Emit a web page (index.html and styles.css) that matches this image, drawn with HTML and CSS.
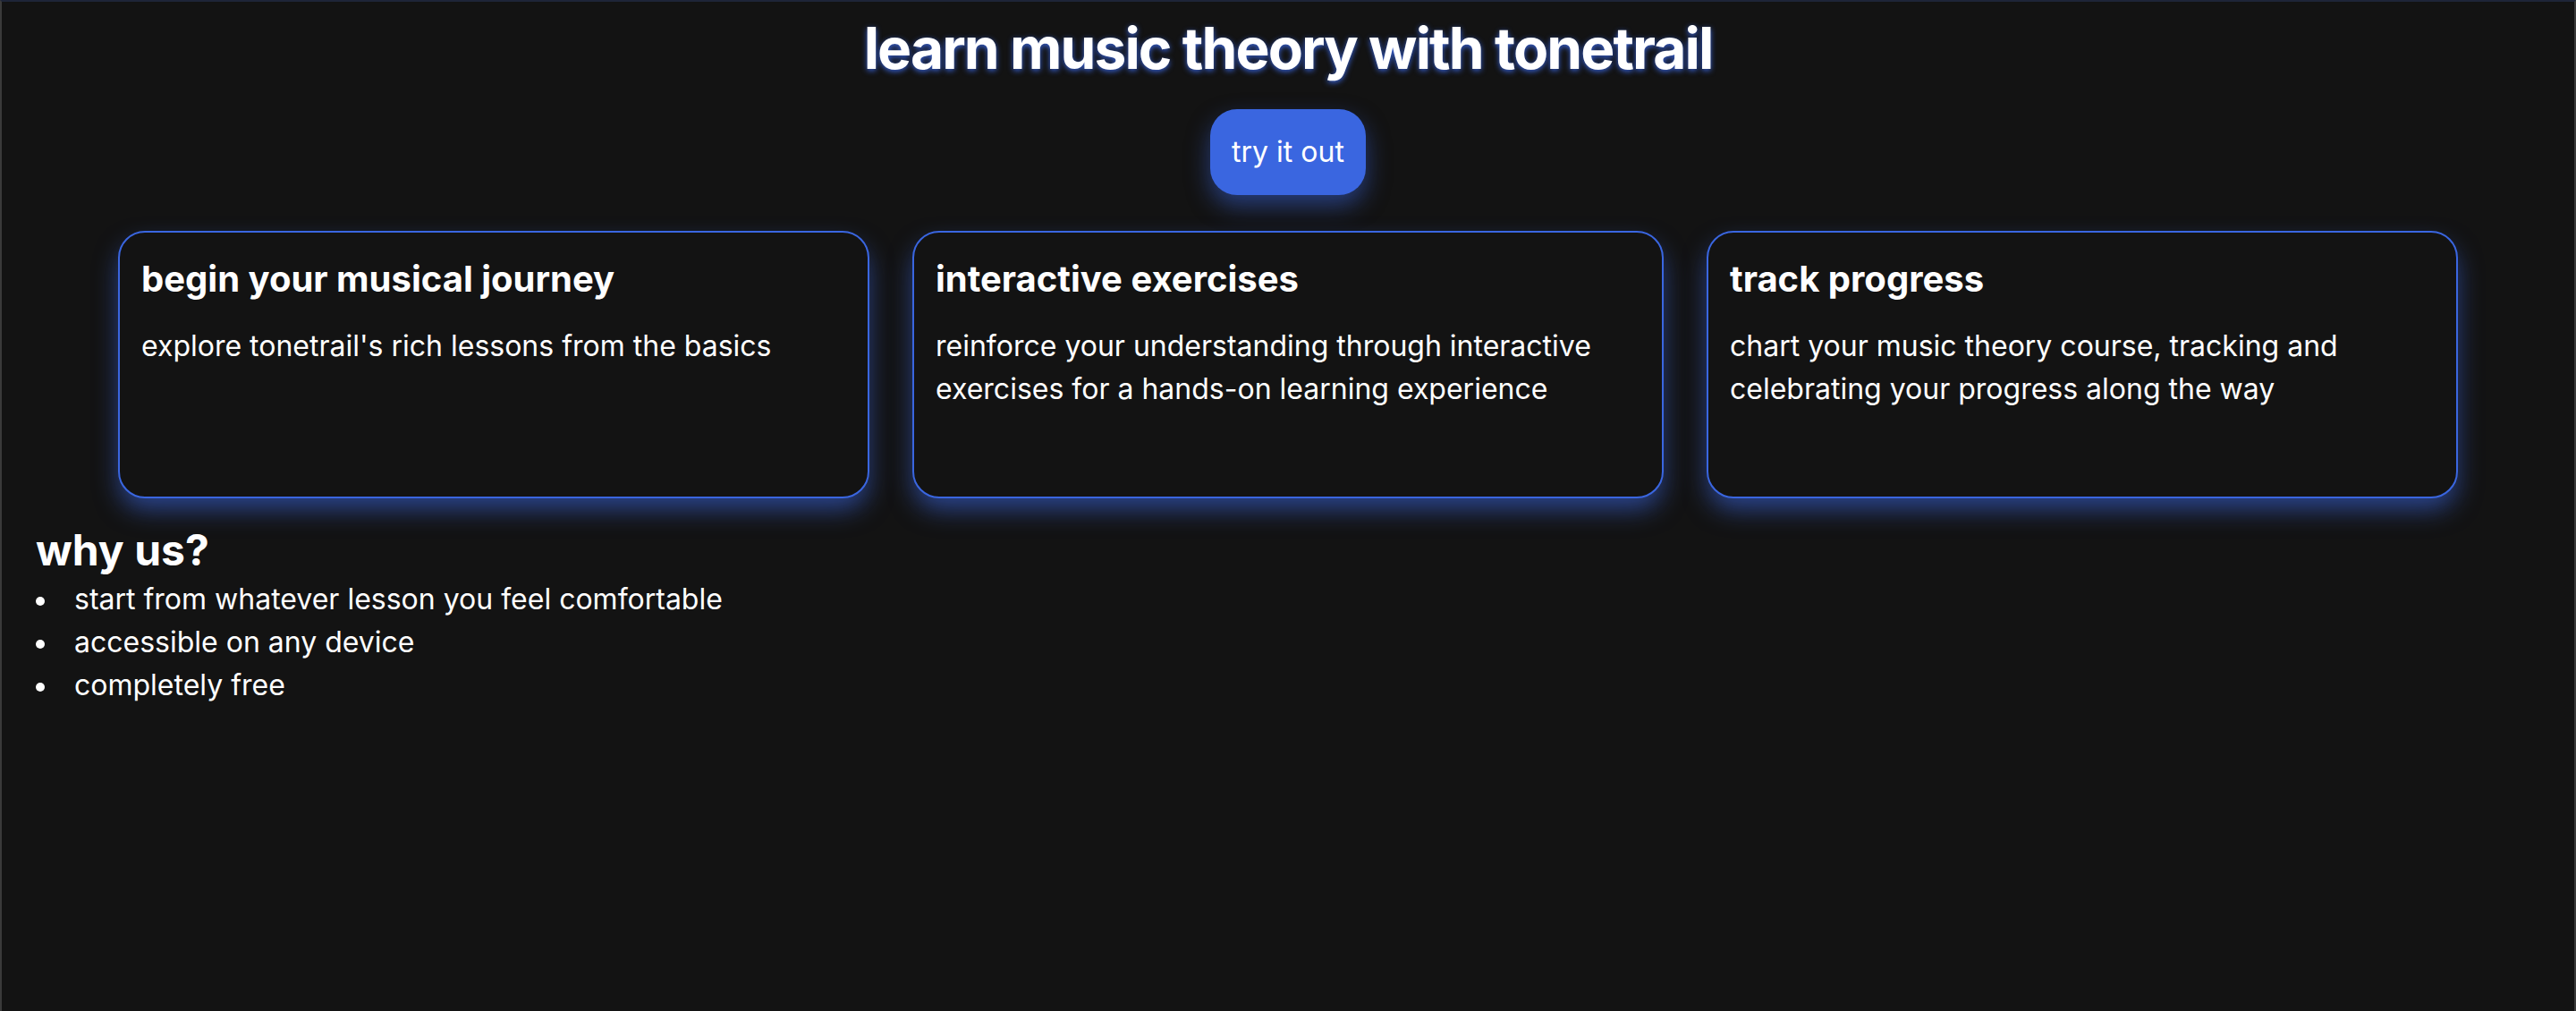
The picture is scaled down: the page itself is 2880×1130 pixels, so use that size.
FILE: index.html
```html
<!DOCTYPE html>
<html lang="en">
<head>
<meta charset="utf-8">
<title>tonetrail</title>
<link rel="stylesheet" href="styles.css">
</head>
<body>
<main class="page">
  <header class="hero">
    <h1 class="hero-title">learn music theory with tonetrail</h1>
    <button class="cta">try it out</button>
  </header>
  <section class="cards">
    <article class="card">
      <h3 class="card-title">begin your musical journey</h3>
      <p class="card-text">explore tonetrail's rich lessons from the basics</p>
    </article>
    <article class="card">
      <h3 class="card-title">interactive exercises</h3>
      <p class="card-text">reinforce your understanding through interactive exercises for a hands-on learning experience</p>
    </article>
    <article class="card">
      <h3 class="card-title">track progress</h3>
      <p class="card-text">chart your music theory course, tracking and celebrating your progress along the way</p>
    </article>
  </section>
  <section class="why">
    <h2 class="why-title">why us?</h2>
    <ul class="why-list">
      <li>start from whatever lesson you feel comfortable</li>
      <li>accessible on any device</li>
      <li>completely free</li>
    </ul>
  </section>
</main>
</body>
</html>
```
FILE: styles.css
```css
* { box-sizing: border-box; }

html, body {
  margin: 0;
  padding: 0;
}

body {
  background: #131313;
  color: #ffffff;
  font-family: Inter, "Noto Sans", "Liberation Sans", sans-serif;
  border-top: 2px solid #1e2538;
  border-left: 2px solid #3a3a3a;
  border-right: 2px solid #3a3a3a;
  min-height: 1130px;
}

.page {
  padding: 0 38px;
}

.hero {
  display: flex;
  flex-direction: column;
  align-items: center;
}

.hero-title {
  margin: 13px 0 0;
  font-size: 64px;
  font-weight: 700;
  line-height: normal;
  letter-spacing: -1.9px;
  text-align: center;
  text-shadow: 0 2px 6px rgba(58, 102, 224, 0.95);
}

.cta {
  margin-top: 30px;
  height: 96px;
  padding: 0 24px;
  border: none;
  border-radius: 30px;
  background: #3a66e0;
  color: #ffffff;
  font-family: inherit;
  font-size: 32px;
  line-height: 96px;
  box-shadow: 0 12px 26px rgba(58, 102, 224, 0.5);
  cursor: pointer;
}

.cards {
  margin: 40px 92px 0;
  display: grid;
  grid-template-columns: repeat(3, 1fr);
  gap: 48px;
}

.card {
  height: 299px;
  padding: 27px 24px;
  border: 2px solid #3a66e0;
  border-radius: 30px;
  background: #131313;
  box-shadow: 0 14px 28px -2px rgba(58, 102, 224, 0.6);
}

.card-title {
  margin: 0;
  font-size: 40px;
  font-weight: 700;
  line-height: normal;
}

.card-text {
  margin: 27px 0 0;
  font-size: 32px;
  line-height: 48px;
}

.why-title {
  margin: 28px 0 0;
  font-size: 48px;
  font-weight: 700;
  line-height: normal;
}

.why-list {
  margin: 2px 0 0;
  padding: 0;
  list-style: none;
  font-size: 32px;
  line-height: 48px;
}

.why-list li::before {
  content: "";
  display: inline-block;
  width: 10px;
  height: 10px;
  border-radius: 50%;
  background: #ffffff;
  vertical-align: middle;
  margin-right: 33px;
}
```
